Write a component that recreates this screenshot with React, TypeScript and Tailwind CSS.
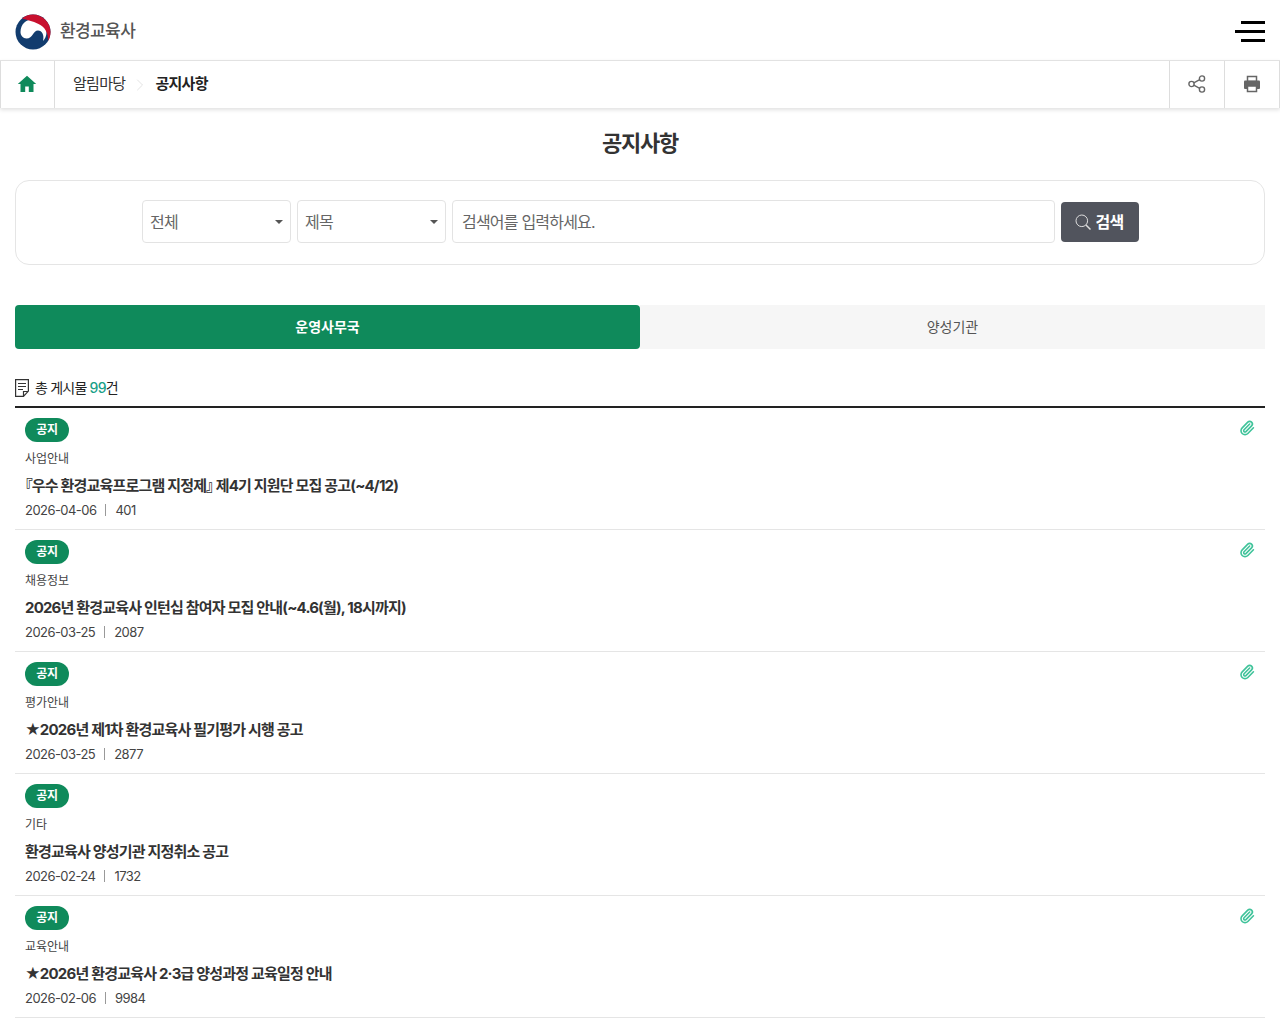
import { FiChevronRight } from 'react-icons/fi'
import { Paperclip } from 'lucide-react'

const font = '[font-family:Inter,"Noto_Sans_CJK_KR",sans-serif]'

const posts = [
  {
    cat: '사업안내',
    title: (
      <>
        <span className="[font-feature-settings:'palt']">『</span>우수 환경교육프로그램 지정제
        <span className="[font-feature-settings:'palt']">』</span> 제4기 지원단 모집 공고(~4/12)
      </>
    ),
    date: '2026-04-06',
    views: '401',
    file: true,
  },
  { cat: '채용정보', title: '2026년 환경교육사 인턴십 참여자 모집 안내(~4.6(월), 18시까지)', date: '2026-03-25', views: '2087', file: true },
  { cat: '평가안내', title: '★2026년 제1차 환경교육사 필기평가 시행 공고', date: '2026-03-25', views: '2877', file: true },
  { cat: '기타', title: '환경교육사 양성기관 지정취소 공고', date: '2026-02-24', views: '1732', file: false },
  { cat: '교육안내', title: '★2026년 환경교육사 2·3급 양성과정 교육일정 안내', date: '2026-02-06', views: '9984', file: true },
]

function Logo() {
  return (
    <svg width="36" height="36" viewBox="0 0 36 36">
      <circle cx="18" cy="18" r="17.500" fill="#123c6e" />
      <path d="M5.500 18C5.500 10 11 5.500 18 5.500S31.500 10 31.500 18c0 4-1.500 7-3.500 9 1.500-6-1-10.500-5-10.500-5 0-5 8-11.500 8C8 24.500 5.500 21.500 5.500 18z" fill="#fff" />
      <path d="M7 4.500C10 2 14 .5 18 .5c9.500 0 17.500 8 17.500 17.500 0 3.500-1 6.500-2.500 9 .5-8-3-14-9.500-17C17.500 7 12 6 7 4.500z" fill="#c8102e" />
    </svg>
  )
}

function Caret() {
  return <span className="w-0 h-0 border-x-[4px] border-x-transparent border-t-[4px] border-t-[#555]" />
}

export default function App() {
  return (
    <div className={`${font} bg-white text-[#222] min-h-[1024px] overflow-hidden`}>
      {/* Top header */}
      <header className="h-[60px] flex items-center justify-between px-[15px] pt-[3px]">
        <div className="flex items-center gap-[9px]">
          <Logo />
          <span className="text-[17px] font-medium text-[#555] tracking-[-0.6px]">환경교육사</span>
        </div>
        <button className="flex flex-col items-end gap-[6px] w-[30px]">
          <span className="block h-[3px] w-[24px] bg-black" />
          <span className="block h-[3px] w-[30px] bg-black" />
          <span className="block h-[3px] w-[24px] bg-black" />
        </button>
      </header>

      {/* Breadcrumb */}
      <div className="h-[48px] flex items-stretch border-t border-[#e2e2e2] shadow-[0_2px_4px_rgba(0,0,0,0.12)]">
        <div className="w-[55px] flex items-center justify-center border-x border-[#ddd] pr-px pb-px">
          <svg width="20" height="18" viewBox="0 0 20 18" fill="#0f8a5b">
            <path d="M10 .8 0.800 9h2.700v8h4.700v-5.500h3.600V17h4.700V9h2.700z" />
          </svg>
        </div>
        <div className="flex-1 flex items-center pl-[18px] text-[15px] tracking-[-0.7px]">
          <span className="text-[#333]">알림마당</span>
          <FiChevronRight className="mx-[5px] text-[20px] text-[#ddd]" strokeWidth={1} />
          <span className="font-semibold text-[#222]">공지사항</span>
        </div>
        <div className="w-[55px] flex items-center justify-center border-l border-[#ddd] pb-px">
          <svg width="18" height="18" viewBox="0 0 18 18" fill="none" stroke="#666" strokeWidth="1.400">
            <circle cx="3.500" cy="9" r="2.600" />
            <circle cx="14" cy="3.500" r="2.600" />
            <circle cx="14" cy="14.500" r="2.600" />
            <path d="m5.800 7.800 5.900-3.100M5.800 10.200l5.900 3.100" />
          </svg>
        </div>
        <div className="w-[56px] flex items-center justify-center border-x border-[#ddd] pb-px">
          <svg width="18" height="18" viewBox="0 0 18 18">
            <rect x="4.500" y="1.500" width="9" height="5" fill="#fff" stroke="#666" strokeWidth="1.500" />
            <rect x="1" y="5.500" width="16" height="8.500" rx="1" fill="#666" />
            <rect x="4.500" y="11" width="9" height="5.500" fill="#fff" stroke="#666" strokeWidth="1.500" />
          </svg>
        </div>
      </div>

      <h1 className="mt-[20px] text-center text-[22px] leading-[30px] font-bold text-[#333] tracking-[-1.2px]">공지사항</h1>

      {/* Search box */}
      <div className="mx-[15px] mt-[22px] h-[85px] border border-[#e5e5e5] rounded-[14px] flex items-center justify-center gap-[6px] pl-[1px] pb-[2px] tracking-[-0.8px]">
        <div className="w-[149px] h-[43px] border border-[#e3e3e3] rounded-[4px] flex items-center justify-between pl-[7px] pr-[7px] text-[16px] text-[#666]">
          전체 <Caret />
        </div>
        <div className="w-[149px] h-[43px] border border-[#e3e3e3] rounded-[4px] flex items-center justify-between pl-[7px] pr-[7px] text-[16px] text-[#666]">
          제목 <Caret />
        </div>
        <input
          placeholder="검색어를 입력하세요."
          className="w-[603px] h-[43px] border border-[#e3e3e3] rounded-[4px] px-[9px] text-[16px] tracking-[-0.8px] placeholder:text-[#666]"
        />
        <button className="w-[78px] h-[40px] bg-[#51545d] rounded-[4px] flex items-center justify-center gap-[5px] pr-[2px] text-white text-[16px] font-bold">
          <svg width="16" height="16" viewBox="0 0 16 16" fill="none" stroke="#ddd" strokeWidth="1">
            <circle cx="6.800" cy="6.800" r="5.800" />
            <path d="m11 11 4.500 4.500" strokeWidth="1.500" />
          </svg>
          검색
        </button>
      </div>

      {/* Tabs */}
      <div className="mx-[15px] mt-[40px] flex h-[44px] text-[14px]">
        <div className="flex-1 bg-[#0f8a5b] rounded-[4px] flex items-center justify-center pb-px text-white font-semibold">운영사무국</div>
        <div className="flex-1 bg-[#f6f6f6] flex items-center justify-center pb-px text-[#555]">양성기관</div>
      </div>

      {/* Count */}
      <div className="mx-[15px] mt-[24px] h-[35px] flex items-center gap-[6px] border-b-2 border-[#222] pb-[4px] text-[14px] tracking-[-0.8px]">
        <svg width="14" height="18" viewBox="0 0 14 18" fill="none" stroke="#333" strokeWidth="1.200">
          <path d="M.6.6h12.800v11.500L8.500 17.400H.6zM3 4.500h8M3 7.500h8M3 10.500h5M8.500 17v-4.500h4.500" />
        </svg>
        <span>
          총 게시물 <span className="text-[#1aa088] font-medium">99</span>건
        </span>
      </div>

      {/* List */}
      <ul className="mx-[15px]">
        {posts.map((post) => (
          <li key={post.date + post.views} className="h-[122px] border-b border-[#e5e5e5] px-[10px] pt-[10px] relative">
            <span className="flex items-center justify-center w-[44px] h-[24px] rounded-full bg-[#0f8a5b] text-white text-[12px] font-semibold tracking-[-0.4px]">공지</span>
            <p className="mt-[9px] text-[12px] leading-[16px] text-[#444]">{post.cat}</p>
            <p className="mt-[7px] text-[15px] leading-[24px] font-bold text-[#333] tracking-[-0.8px]">{post.title}</p>
            <p className="mt-[3px] flex items-center text-[13px] leading-[18px] text-[#444] tracking-[-0.55px]">
              {post.date}
              <span className="mx-[9px] h-[12px] w-px bg-[#999]" />
              {post.views}
            </p>
            {post.file && (
              <span className="absolute right-[10px] top-[12px]">
                <Paperclip size={16} color="#3fc39a" strokeWidth={2.400} />
              </span>
            )}
          </li>
        ))}
      </ul>
    </div>
  )
}
